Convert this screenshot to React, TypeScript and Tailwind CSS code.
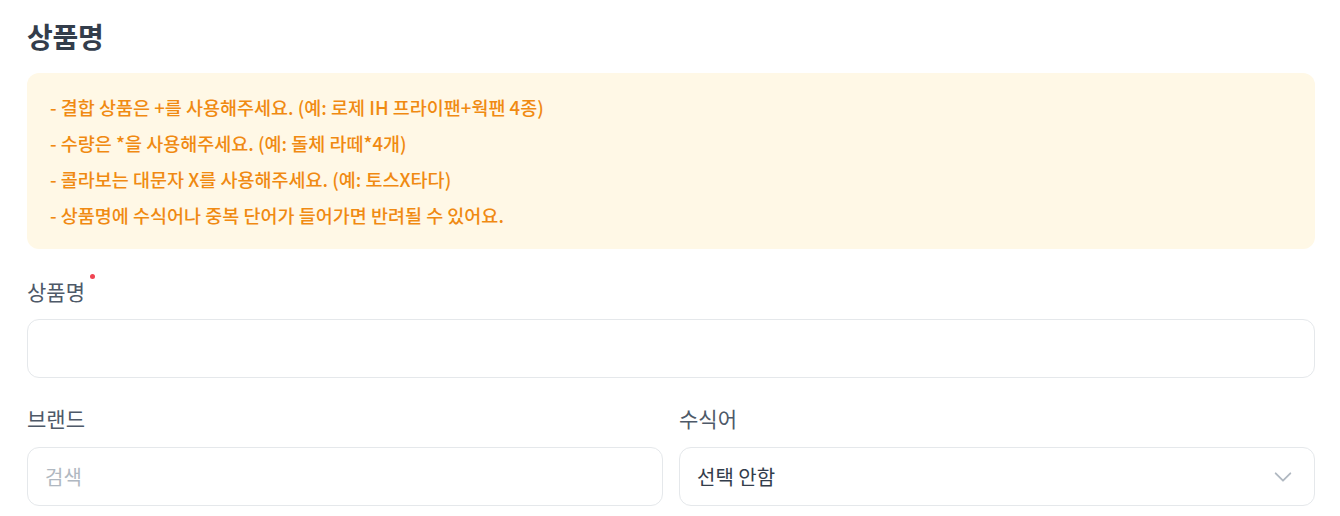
import React from "react";

export default function App() {
  const font = { fontFamily: '"Noto Sans CJK KR", "Noto Sans", sans-serif' };
  return (
    <div className="w-[1340px] h-[516px] bg-white overflow-hidden" style={font}>
      <div className="pl-[27px] pr-[25px] pt-[18px]">
        <h2 className="text-[28px] leading-[36px] font-bold text-[#333d4b] tracking-[-0.3px]">상품명</h2>
        <div className="mt-[19px] rounded-[12px] bg-[#fff8e6] pl-[23px] pr-4 py-[16px] text-[18.5px] leading-[36px] font-medium text-[#f08a12]">
          <p>- 결합 상품은 +를 사용해주세요. (예: 로제 IH 프라이팬+웍팬 4종)</p>
          <p>- 수량은 *을 사용해주세요. (예: 돌체 라떼*4개)</p>
          <p>- 콜라보는 대문자 X를 사용해주세요. (예: 토스X타다)</p>
          <p>- 상품명에 수식어나 중복 단어가 들어가면 반려될 수 있어요.</p>
        </div>
        <div className="mt-[28px] flex items-start">
          <span className="text-[21px] leading-[28px] text-[#4e5968]">상품명</span>
          <span className="ml-[5px] -mt-[3px] w-[5px] h-[5px] rounded-full bg-[#f04452]"></span>
        </div>
        <div className="mt-[14px] h-[59px] rounded-[12px] border border-[#e5e8eb] bg-white"></div>
        <div className="mt-[26px] grid grid-cols-2 gap-4">
          <div>
            <div className="text-[21px] leading-[28px] text-[#4e5968]">브랜드</div>
            <div className="mt-[15px] h-[59px] rounded-[12px] border border-[#e5e8eb] bg-white flex items-center px-[17px]">
              <span className="text-[20px] text-[#b0b8c1]">검색</span>
            </div>
          </div>
          <div>
            <div className="text-[21px] leading-[28px] text-[#4e5968]">수식어</div>
            <div className="mt-[15px] h-[59px] rounded-[12px] border border-[#e5e8eb] bg-white flex items-center justify-between pl-[17px] pr-[20px]">
              <span className="text-[20px] text-[#333d4b]">선택 안함</span>
              <svg width="22" height="22" viewBox="0 0 24 24" fill="none" stroke="#b0b8c1" strokeWidth="2" strokeLinecap="round" strokeLinejoin="round">
                <path d="M4 8l8 8 8-8" />
              </svg>
            </div>
          </div>
        </div>
      </div>
    </div>
  );
}
